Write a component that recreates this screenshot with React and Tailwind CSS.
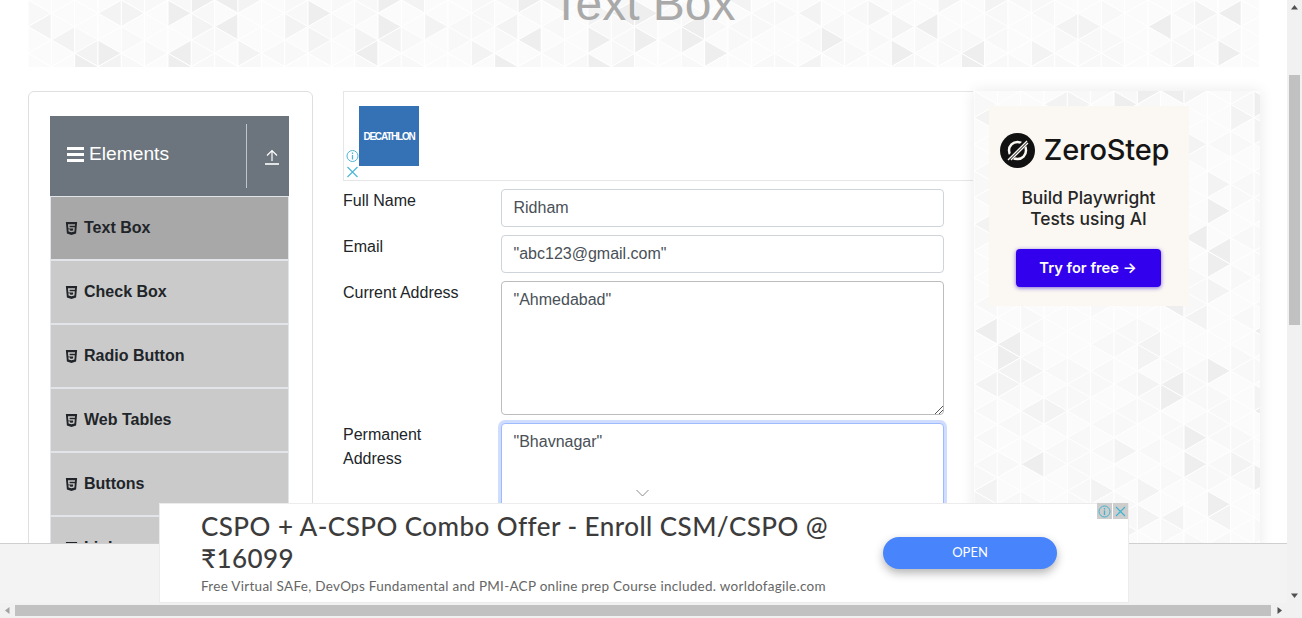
import React from "react";

const DX = 70 / 3;
const DY = 80 / 3;
const shade = (a, b, k) => {
  const v = Math.abs(Math.sin(a * 12.9898 + b * 78.233 + k * 37.719) * 43758.5453) % 1;
  if (v < 0.07) return "#eeeeee";
  if (v < 0.16) return "#f3f3f3";
  if (v < 0.5) return "#f8f8f8";
  return "#fbfbfb";
};

const Tri = ({ w, h }) => {
  const polys = [];
  const cols = Math.ceil(w / DX) + 1;
  const rows = Math.ceil(h / DY) + 2;
  for (let c = -1; c < cols; c++) {
    const x0 = c * DX;
    const x1 = x0 + DX;
    const even = ((c % 2) + 2) % 2 === 0;
    for (let m = -1; m < rows; m++) {
      const yL = (even ? 0 : DY / 2) + m * DY;
      const yR = yL + DY / 2;
      polys.push(
        <polygon key={`a${c}_${m}`} points={`${x0},${yL} ${x1},${yR} ${x0},${yL + DY}`} fill={shade(c, m, 1)} stroke="#ffffff" strokeWidth="1" />
      );
      polys.push(
        <polygon key={`b${c}_${m}`} points={`${x1},${yR} ${x0},${yL + DY} ${x1},${yR + DY}`} fill={shade(c, m, 2)} stroke="#ffffff" strokeWidth="1" />
      );
    }
  }
  return (
    <svg className="absolute left-0 top-0" width={w} height={h} aria-hidden="true">
      {polys}
    </svg>
  );
};

const Html5 = () => (
  <svg viewBox="0 0 384 512" className="w-[13px] h-[15px] shrink-0" fill="#212529">
    <path d="M0 32l34.900 395.800L191.500 480l157.600-52.200L384 32H0zm308.200 127.900H124.400l4.100 49.400h175.600l-13.600 148.400-97.900 27v.3h-1.100l-98.700-27.300-6-75.800h47.700L138 320l53.500 14.500 53.700-14.500 6-62.200H84.300L71.500 112.200h241.100l-4.400 47.700z" />
  </svg>
);

const items = ["Text Box", "Check Box", "Radio Button", "Web Tables", "Buttons", "Links"];

const Field = ({ label, children }) => (
  <div className="flex mb-2">
    <label className="w-[157.500px] shrink-0 text-[16px] leading-[24px] text-[#212529]">{label}</label>
    {children}
  </div>
);

const Box = ({ children, h = "h-[38px]", cls = "border-[#ced4da]" }) => (
  <div className={`w-[443px] ${h} border rounded-[4px] px-3 py-[6px] text-[16px] leading-[24px] text-[#495057] shrink-0 bg-white ${cls}`}>{children}</div>
);

export default function App() {
  return (
    <div className="relative w-[1302px] h-[618px] overflow-hidden bg-white" style={{ fontFamily: '"Liberation Sans", Arial, sans-serif' }}>
      <div className="relative ml-[28px] w-[1231px] h-[67px] overflow-hidden">
        <Tri w={1231} h={67} />
        <div className="absolute left-0 right-0 top-[-25px] text-center text-[48px] leading-[58px] font-medium text-[#a9a9a9]">Text Box</div>
      </div>

      <div className="flex mt-[24px] ml-[28px]">
        <div className="w-[285px] h-[600px] shrink-0 border border-[#dfdfdf] rounded-[6px] pt-[24px] pl-[21px]">
          <div className="w-[239px]">
            <div className="h-[80px] bg-[#6c757d] flex items-center text-white">
              <div className="flex-1 flex items-center pl-[17px] pb-[4px] text-[19.200px] leading-[24px] h-full">
                <span className="flex flex-col justify-between w-[17px] h-[15px] mr-[5px] mt-[1px]">
                  <i className="block h-[3px] bg-white" />
                  <i className="block h-[3px] bg-white" />
                  <i className="block h-[3px] bg-white" />
                </span>
                Elements
              </div>
              <div className="w-[43px] h-[64px] border-l border-[#c3c6c9] flex items-center justify-center pl-[7px]">
                <svg width="16" height="16" viewBox="0 0 16 16" className="mt-[1px]" fill="none" stroke="#fff" strokeWidth="1.200">
                  <path d="M8 12V1.500M3 6.500L8 1.500L13 6.500" />
                  <path d="M1 15H15" strokeWidth="1.600" />
                </svg>
              </div>
            </div>
            {items.map((t, i) => (
              <div key={t} className={`h-[64px] flex items-center pl-[14px] gap-[6px] border border-[#e1e5ea] text-[16px] font-bold text-[#212529] ${i === 0 ? "bg-[#a8a8a8]" : "bg-[#cacaca]"}`}>
                <Html5 />
                {t}
              </div>
            ))}
          </div>
        </div>

        <div className="ml-[30px] w-[630px] shrink-0">
          <div className="relative h-[90px] border-y border-l border-[#e6e6e6] w-[630px]">
            <div className="absolute left-[15px] top-[14px] w-[60px] h-[60px] bg-[#3571b5] flex items-center justify-center text-white text-[10px] font-bold tracking-[-1.200px]">DECATHLON</div>
            <svg className="absolute left-[1px] top-[57px]" width="14" height="30" viewBox="0 0 14 30" fill="none" stroke="#4fb6d8">
              <circle cx="7.500" cy="7" r="5.500" />
              <path d="M7.500 6v4.500M7.500 3.500v1.500" strokeWidth="1.300" />
              <path d="M2.500 18l10 10M12.500 18l-10 10" strokeWidth="1.200" />
            </svg>
          </div>
          <div className="pt-[8px]">
            <Field label="Full Name"><Box>Ridham</Box></Field>
            <Field label="Email"><Box>"abc123@gmail.com"</Box></Field>
            <Field label="Current Address">
              <div className="relative">
                <Box h="h-[134px]" cls="border-[#bdbdbd]">"Ahmedabad"</Box>
                <svg className="absolute right-[1px] bottom-[1px]" width="9" height="9" viewBox="0 0 9 9" stroke="#555" fill="none"><path d="M1 9L9 1M5 9L9 5" /></svg>
              </div>
            </Field>
            <Field label={<>Permanent<br />Address</>}>
              <Box h="h-[134px]" cls="border-[#9dbcff] shadow-[0_0_0_3px_rgba(70,120,255,0.25)]">"Bhavnagar"</Box>
            </Field>
          </div>
        </div>
      </div>

      <div className="absolute left-[974px] top-[91px] w-[286px] h-[460px] shadow-[0_0_14px_rgba(0,0,0,0.09)] bg-white">
        <div className="absolute inset-0 overflow-hidden"><Tri w={286} h={460} /></div>
        <div className="absolute left-[15px] top-[15px] w-[200px] h-[200px] bg-[#fbf8f3] flex flex-col items-center" style={{ fontFamily: 'Inter, sans-serif' }}>
          <div className="flex items-center gap-[9px] mt-[26px] ml-[-9px]">
            <svg width="35" height="35" viewBox="0 0 35 35">
              <circle cx="17.500" cy="17.500" r="17.500" fill="#111" />
              <circle cx="17.500" cy="17.500" r="8.500" fill="none" stroke="#fbf8f3" strokeWidth="2.500" />
              <path d="M6 29L29 6" stroke="#111" strokeWidth="6" />
              <path d="M8 27L27 8M11 27L28 10" stroke="#fbf8f3" strokeWidth="1.300" />
            </svg>
            <span className="text-[29px] leading-[36px] font-medium text-[#151515] tracking-[-0.200px]">ZeroStep</span>
          </div>
          <div className="mt-[19px] text-center text-[17.400px] leading-[21px] font-medium text-[#262626] ml-[-1px]">Build Playwright<br />Tests using AI</div>
          <div className="mt-[20px] ml-[-2px] w-[145px] h-[38px] rounded-[4px] bg-[#3300ee] text-white text-[14.700px] font-semibold flex items-center justify-center shadow-[0_1px_4px_rgba(40,0,200,0.6)]">Try for free →</div>
        </div>
      </div>

      <svg className="absolute left-[636px] top-[489px]" width="13" height="8" viewBox="0 0 13 8" fill="none" stroke="#8a8a8a"><path d="M0.500 1L6.500 7L12.500 1" /></svg>

      <div className="absolute left-0 top-[543px] w-[1287px] h-[60px] bg-[#f3f3f3] border-t border-[#cfcfcf]" />

      <div className="absolute left-[159px] top-[503px] w-[970px] h-[100px] bg-white border border-[#ececec]" style={{ fontFamily: 'Lato, "Noto Sans", sans-serif' }}>
        <div className="absolute left-[41px] top-[6px] w-[680px] text-[26px] leading-[32px] text-[#3c3c3c] tracking-[0.450px] font-medium">CSPO + A-CSPO Combo Offer - Enroll CSM/CSPO @ ₹16099</div>
        <div className="absolute left-[41px] top-[73px] text-[13.500px] leading-[18px] text-[#666] tracking-[0.280px]">Free Virtual SAFe, DevOps Fundamental and PMI-ACP online prep Course included. worldofagile.com</div>
        <div className="absolute left-[723px] top-[33px] w-[174px] h-[32px] rounded-full bg-[#4885fd] text-white text-[13px] flex items-center justify-center shadow-[0_4px_10px_rgba(0,0,0,0.3)]">OPEN</div>
        <div className="absolute right-0 top-[-1px] flex gap-[1px]">
          <div className="w-[15px] h-[16px] bg-[#cdcdcd] flex items-center justify-center">
            <svg width="13" height="13" viewBox="0 0 13 13" fill="none" stroke="#3fb3d0"><circle cx="6.500" cy="6.500" r="5.500" /><path d="M6.500 5.500V10M6.500 3v1.500" strokeWidth="1.300" /></svg>
          </div>
          <div className="w-[15px] h-[16px] bg-[#cdcdcd] flex items-center justify-center">
            <svg width="11" height="11" viewBox="0 0 11 11" fill="none" stroke="#3fb3d0" strokeWidth="1.200"><path d="M1 1l9 9M10 1l-9 9" /></svg>
          </div>
        </div>
      </div>

      <div className="absolute right-0 top-0 w-[15px] h-[603px] bg-[#f1f1f1] flex flex-col items-center justify-between">
        <svg width="15" height="15" viewBox="0 0 15 15" fill="#505050"><path d="M7.500 5L11 9.500H4Z" /></svg>
        <div className="absolute left-[2px] top-[75px] w-[11px] h-[250px] bg-[#c1c1c1]" />
        <svg width="15" height="15" viewBox="0 0 15 15" fill="#505050"><path d="M7.500 10L11 5.500H4Z" /></svg>
      </div>
      <div className="absolute left-0 top-[603px] w-[1302px] h-[15px] bg-[#f1f1f1] flex items-center justify-between pr-[15px]">
        <svg width="15" height="15" viewBox="0 0 15 15" fill="#a3a3a3"><path d="M5 7.500L9.500 4V11Z" /></svg>
        <div className="absolute left-[15px] top-[2px] w-[1256px] h-[11px] bg-[#c1c1c1]" />
        <svg width="15" height="15" viewBox="0 0 15 15" fill="#505050"><path d="M10 7.500L5.500 4V11Z" /></svg>
      </div>
    </div>
  );
}
